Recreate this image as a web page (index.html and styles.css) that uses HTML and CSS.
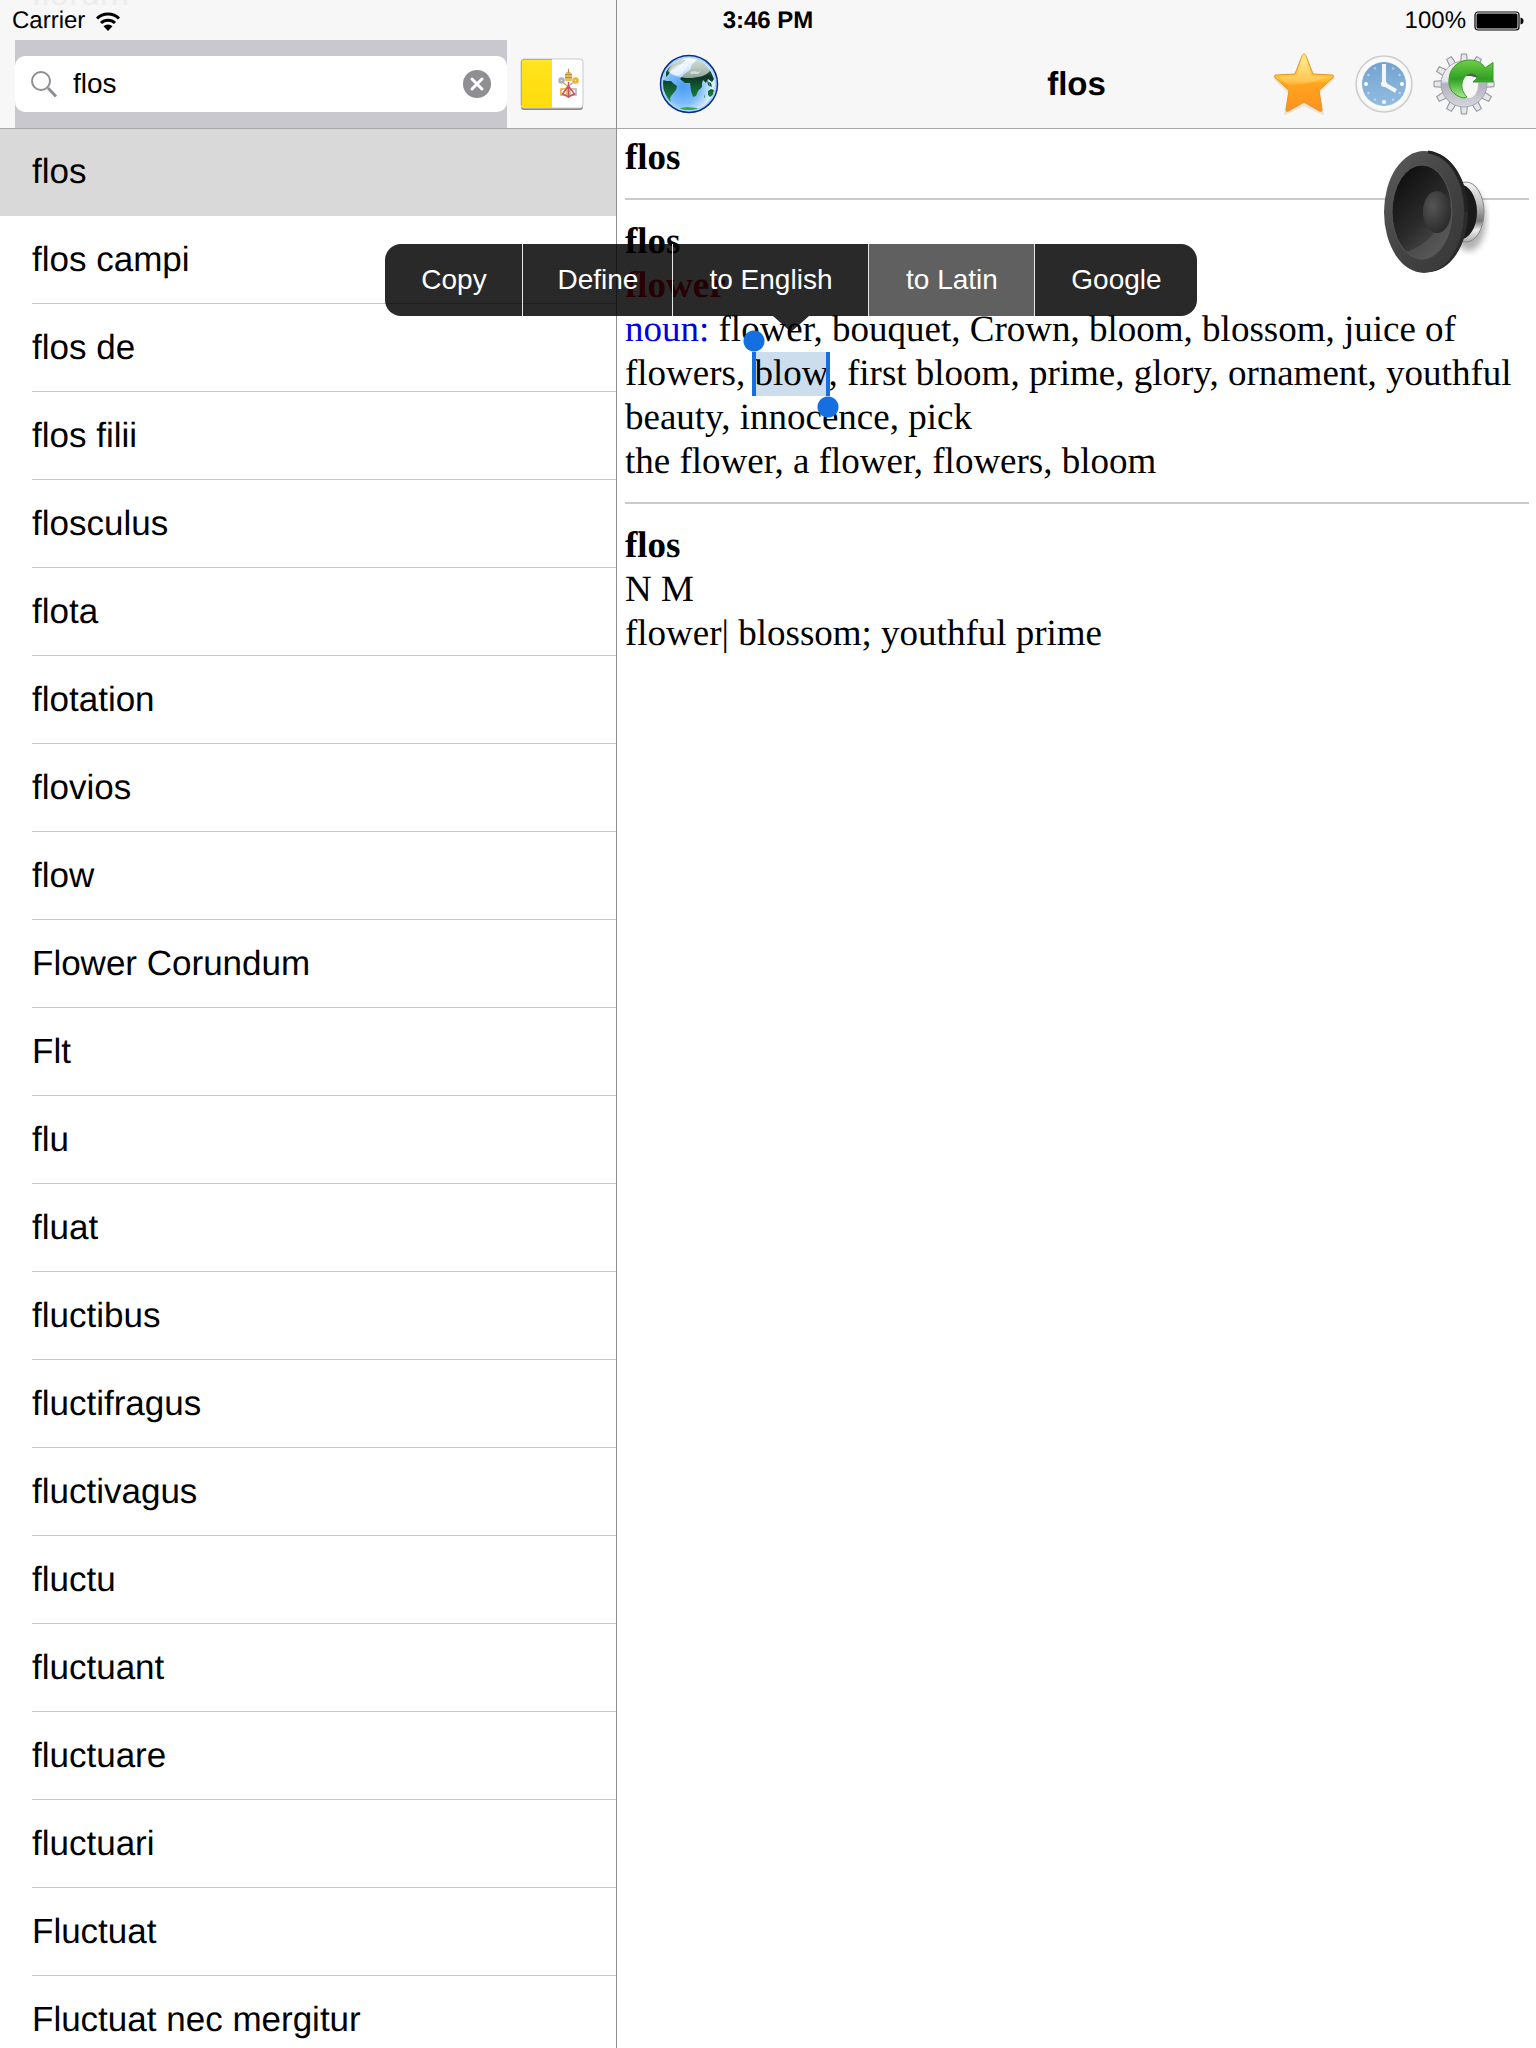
FILE: index.html
```html
<!DOCTYPE html>
<html lang="en">
<head>
    <meta charset="UTF-8">
    <meta name="viewport" content="width=device-width, initial-scale=1.0">
    <title>flos</title>
    <link rel="stylesheet" href="styles.css">
</head>
<body>

<div class="status-bar">
    <div class="carrier">
        Carrier
        <svg width="26" height="22" viewBox="0 0 26 22">
            <g fill="none" stroke="#000" stroke-width="3">
                <path d="M2 8.500a15.500 15.500 0 0 1 22 0"/>
                <path d="M6 13a10 10 0 0 1 14 0"/>
            </g>
            <path d="M13 21l-4.500-4.700a6.300 6.300 0 0 1 9 0z"/>
        </svg>
    </div>
    <div class="time">3:46 PM</div>
    <div class="battery">
        100%
        <svg width="50" height="20" viewBox="0 0 50 20">
            <rect x="1" y="1" width="44" height="18" rx="3" fill="none" stroke="#000" stroke-width="1.200"/>
            <rect x="2.500" y="2.500" width="41" height="15" rx="1.500"/>
            <path d="M46.500 6.500q3 .5 3 3.500t-3 3.500z"/>
        </svg>
    </div>
</div>

<div class="app">
    <aside class="sidebar">
        <div class="ghost" aria-hidden="true">florum</div>
        <header class="search-bar">
            <form class="search">
                <label class="field" for="query">
                    <svg width="28" height="28" viewBox="0 0 28 28" fill="none" stroke="#8e8e93">
                        <circle cx="10" cy="11" r="9" stroke-width="2"/>
                        <path d="M17 18l8 8.500" stroke-width="3"/>
                    </svg>
                    <input type="text" id="query" name="query" value="flos" aria-label="Search">
                    <button class="clear" type="reset" aria-label="Clear">
                        <svg width="28" height="28" viewBox="0 0 28 28">
                            <circle cx="14" cy="14" r="14" fill="#8e8e93"/>
                            <path d="M9 9l10 10M19 9L9 19" stroke="#fff" stroke-width="3" stroke-linecap="round"/>
                        </svg>
                    </button>
                </label>
            </form>
            <button class="icon-btn" type="button" aria-label="Latin">
                <svg width="64" height="56" viewBox="0 0 64 56">
                    <defs>
                        <linearGradient id="yellow" x1="0" y1="0" x2="0" y2="1">
                            <stop offset="0" stop-color="#ffe92e"/>
                            <stop offset=".1" stop-color="#ffe31c"/>
                            <stop offset="1" stop-color="#ffdc0c"/>
                        </linearGradient>
                    </defs>
                    <rect x="1" y="5" width="62" height="49" rx="3" fill="#8a8a8a"/>
                    <rect x="1" y="3" width="62" height="49" rx="3" fill="#fff" stroke="#c9c9c9"/>
                    <path d="M32 3H4a3 3 0 0 0-3 3v43a3 3 0 0 0 3 3h28z" fill="url(#yellow)"/>
                    <path d="M32 3.500H4a2.500 2.500 0 0 0-2.500 2.500v43" fill="none" stroke="#cdb425"/>
                    <!-- crossed keys and tiara -->
                    <g fill="none" stroke-width="1.500">
                        <path d="M41 25l9 7M41 33h6v6h-6z" stroke="#e8a93a"/>
                        <path d="M55 25l-9 7M50 33h6v6h-6z" stroke="#b3aeb0"/>
                        <path d="M48.500 26v16M48.500 30l-6 8 6 3 6-3z" stroke="#c4545a"/>
                    </g>
                    <g fill="none" stroke-width="2.500">
                        <circle cx="41.500" cy="24.500" r="2" stroke="#aeb0b8"/>
                        <circle cx="55.500" cy="24.500" r="2" stroke="#eeb22d"/>
                    </g>
                    <path d="M45.500 25c-1.500-5-1-8 3-10 4 2 4.500 5 3 10z" fill="#e2bb62"/>
                    <path d="M45 18.500h7M45 21.500h7M48.500 13v4" stroke="#b98c3c" fill="none"/>
                </svg>
            </button>
        </header>
        <ul class="words">
            <li><a class="active" href="#">flos</a></li>
            <li><a href="#">flos campi</a></li>
            <li><a href="#">flos de</a></li>
            <li><a href="#">flos filii</a></li>
            <li><a href="#">flosculus</a></li>
            <li><a href="#">flota</a></li>
            <li><a href="#">flotation</a></li>
            <li><a href="#">flovios</a></li>
            <li><a href="#">flow</a></li>
            <li><a href="#">Flower Corundum</a></li>
            <li><a href="#">Flt</a></li>
            <li><a href="#">flu</a></li>
            <li><a href="#">fluat</a></li>
            <li><a href="#">fluctibus</a></li>
            <li><a href="#">fluctifragus</a></li>
            <li><a href="#">fluctivagus</a></li>
            <li><a href="#">fluctu</a></li>
            <li><a href="#">fluctuant</a></li>
            <li><a href="#">fluctuare</a></li>
            <li><a href="#">fluctuari</a></li>
            <li><a href="#">Fluctuat</a></li>
            <li><a href="#">Fluctuat nec mergitur</a></li>
        </ul>
    </aside>

    <main class="detail">
        <header class="toolbar">
            <div class="tools">
                <button class="icon-btn" type="button" aria-label="Web">
                    <svg width="64" height="64" viewBox="0 0 64 64">
                        <defs>
                            <radialGradient id="sea" cx=".4" cy=".55" r=".6">
                                <stop offset="0" stop-color="#4a9cf5"/>
                                <stop offset=".5" stop-color="#7fbcfb"/>
                                <stop offset=".85" stop-color="#dceeff"/>
                                <stop offset="1" stop-color="#cfeaff"/>
                            </radialGradient>
                            <linearGradient id="land" x1="0" y1="10" x2="0" y2="48" gradientUnits="userSpaceOnUse">
                                <stop offset="0" stop-color="#4a7a5a"/>
                                <stop offset=".4" stop-color="#0b3528"/>
                                <stop offset="1" stop-color="#1d8a3c"/>
                            </linearGradient>
                            <linearGradient id="gloss" x1="0" y1="0" x2="0" y2="1">
                                <stop offset="0" stop-color="#fff" stop-opacity=".75"/>
                                <stop offset="1" stop-color="#fff" stop-opacity=".55"/>
                            </linearGradient>
                        </defs>
                        <circle cx="32" cy="32" r="28" fill="url(#sea)"/>
                        <g fill="url(#land)">
                            <path d="M9 20l4-6 5-4 6-3 5 1-6 5-4 3-5 3-3 4-2 2z"/>
                            <path d="M6 28l4 1 4 0 3 3 3 2-1 4-4 5-2 3 1 4-3-3-3-6-3-6z"/>
                            <path d="M23 27l4-5 6-4 2-6 6-5 8 6 5 7 3 7-2 3-4-3-2 4-3-3-1 3 0 4-4 4-2 5-3 1-2-6-1-8-5 0z"/>
                            <path d="M51 39l3-2 3 1-1 5-3 2-2-2zM52 30l2 1 1 4-2-1zM48 42l0 3-1 1z"/>
                            <path d="M50 28l2 3 1 4-2-2z"/>
                        </g>
                        <path d="M23 56l7-1 10 1 1 1-9 2-8-1z" fill="#32a852"/>
                        <path d="M11 19C15 9 23 5 32 5s17 4 21 14c-4 5-13 7-21 7s-16-2-21-7z" fill="url(#gloss)"/>
                        <path d="M12 20c4-7 12-9 19-8-1 5-4 7-8 11-5 1-8 0-11-3zM33 20l4-1 4 1 3-1-3 3-7 0z" fill="#fff" opacity=".5"/>
                        <circle cx="32" cy="32" r="27" fill="none" stroke="#a5d9fb" stroke-width="2"/>
                        <circle cx="32" cy="32" r="28.500" fill="none" stroke="#0d2c8c" stroke-width="1.500"/>
                    </svg>
                </button>
            </div>
            <h1>flos</h1>
            <div class="tools tools-right">
                <button class="icon-btn" type="button" aria-label="Favourites">
                    <svg width="64" height="64" viewBox="0 0 64 64">
                        <defs>
                            <linearGradient id="star" x1="0" y1="0" x2="0" y2="1">
                                <stop offset="0" stop-color="#fff08c"/>
                                <stop offset=".48" stop-color="#ffb828"/>
                                <stop offset=".5" stop-color="#ffa61c"/>
                                <stop offset="1" stop-color="#ff9022"/>
                            </linearGradient>
                        </defs>
                        <path d="M32 4L22.500 24 2 26l15 15-4 21 19-9 19 9-4-21 15-15-20.500-2z" fill="#d8c69c" opacity=".6" stroke="#e5d9ba" stroke-width="2" stroke-linejoin="round"/>
                        <path d="M32 2c-1 0-1.500 1-2 2l-7 18-19 1c-2 0-2 1.500-1 2.500l14 13-3 19c0 2 1 2.500 2.500 1.500L32 50l15.500 9c1.500 1 2.500.5 2.500-1.500l-3-19 14-13c1-1 1-2.500-1-2.500l-19-1-7-18c-.5-1-1-2-2-2z" fill="url(#star)" stroke="#e0962b"/>
                        <path d="M32 5l-7 19-18 1 7 7q18 2 33-4l10-3-18-1z" fill="#fff" opacity=".18"/>
                    </svg>
                </button>
                <button class="icon-btn" type="button" aria-label="History">
                    <svg width="64" height="64" viewBox="0 0 64 64">
                        <defs>
                            <linearGradient id="face" x1="0" y1="0" x2="0" y2="1">
                                <stop offset="0" stop-color="#72a3cf"/>
                                <stop offset="1" stop-color="#93bde0"/>
                            </linearGradient>
                        </defs>
                        <circle cx="32" cy="32" r="28" fill="#f4f4f5" stroke="#cdcdd0" stroke-width="1.500"/>
                        <circle cx="32" cy="31.500" r="26" fill="#fafafb"/>
                        <circle cx="32" cy="32" r="22" fill="url(#face)"/>
                        <g fill="#fff">
                            <circle cx="14" cy="32" r="2"/>
                            <circle cx="50" cy="32" r="2"/>
                            <circle cx="32" cy="50" r="2"/>
                            <g opacity=".45">
                                <circle cx="16.400" cy="23" r="1.200"/>
                                <circle cx="23" cy="16.400" r="1.200"/>
                                <circle cx="41" cy="16.400" r="1.200"/>
                                <circle cx="47.600" cy="23" r="1.200"/>
                                <circle cx="47.600" cy="41" r="1.200"/>
                                <circle cx="41" cy="47.600" r="1.200"/>
                                <circle cx="23" cy="47.600" r="1.200"/>
                                <circle cx="16.400" cy="41" r="1.200"/>
                            </g>
                        </g>
                        <path d="M32 12v20l12 7" fill="none" stroke="#f3f5f8" stroke-width="4"/>
                        <circle cx="32" cy="32" r="3" fill="#f3f5f8"/>
                    </svg>
                </button>
                <button class="icon-btn" type="button" aria-label="Settings">
                    <svg width="64" height="64" viewBox="0 0 64 64">
                        <defs>
                            <linearGradient id="steel" x1="0" y1="2" x2="0" y2="62" gradientUnits="userSpaceOnUse">
                                <stop offset="0" stop-color="#fbfbfc"/>
                                <stop offset=".45" stop-color="#e4e4ea"/>
                                <stop offset=".5" stop-color="#b0b0be"/>
                                <stop offset="1" stop-color="#e2e2e9"/>
                            </linearGradient>
                            <linearGradient id="leaf" x1="0" y1="0" x2="0" y2="1">
                                <stop offset="0" stop-color="#6fd044"/>
                                <stop offset=".5" stop-color="#2fa025"/>
                                <stop offset="1" stop-color="#a8ef8c"/>
                            </linearGradient>
                            <path id="tooth" d="M28.500 13l.8-11h5.400l.8 11z"/>
                        </defs>
                        <g fill="#e6e6ec" stroke="#8e8e96">
                            <use href="#tooth"/>
                            <use href="#tooth" transform="rotate(30 32 32)"/>
                            <use href="#tooth" transform="rotate(60 32 32)"/>
                            <use href="#tooth" transform="rotate(90 32 32)"/>
                            <use href="#tooth" transform="rotate(120 32 32)"/>
                            <use href="#tooth" transform="rotate(150 32 32)"/>
                            <use href="#tooth" transform="rotate(180 32 32)"/>
                            <use href="#tooth" transform="rotate(210 32 32)"/>
                            <use href="#tooth" transform="rotate(240 32 32)"/>
                            <use href="#tooth" transform="rotate(270 32 32)"/>
                            <use href="#tooth" transform="rotate(300 32 32)"/>
                            <use href="#tooth" transform="rotate(330 32 32)"/>
                        </g>
                        <circle cx="32" cy="32" r="23" fill="url(#steel)" stroke="#a4a4ae"/>
                        <circle cx="33" cy="32" r="14" fill="#c3c3cc"/>
                        <ellipse cx="37" cy="33" rx="9" ry="13" fill="#f7f7f7"/>
                        <path d="M32 24q4-6 10-4l4 6-7-2z" fill="#555"/>
                        <path d="M32 46C21 44 16 36 17 27 18 14 28 8 38 8c8 0 13 4 15 8l8-5.500V30H41l5-5c-4-5-11-4-14 1-4 7-2 14 3 19z" fill="url(#leaf)" stroke="#3a9a2a"/>
                    </svg>
                </button>
            </div>
        </header>

        <article class="entry">
            <button class="speaker" type="button" aria-label="Pronounce">
                <svg width="128" height="128" viewBox="0 0 128 128">
                    <defs>
                        <linearGradient id="rim" x1="0" y1="0" x2="1" y2="1">
                            <stop offset="0" stop-color="#5c5c5c"/>
                            <stop offset=".5" stop-color="#444"/>
                            <stop offset="1" stop-color="#363636"/>
                        </linearGradient>
                        <linearGradient id="cone" x1=".2" y1=".1" x2=".8" y2="1">
                            <stop offset="0" stop-color="#111"/>
                            <stop offset=".5" stop-color="#2a2a2a"/>
                            <stop offset="1" stop-color="#565656"/>
                        </linearGradient>
                        <radialGradient id="dome" cx=".35" cy=".35" r=".7">
                            <stop offset="0" stop-color="#555"/>
                            <stop offset="1" stop-color="#2b2b2b"/>
                        </radialGradient>
                        <linearGradient id="chrome" x1="0" y1="0" x2="0" y2="1">
                            <stop offset="0" stop-color="#f4f4f4"/>
                            <stop offset=".35" stop-color="#c4c4c4"/>
                            <stop offset=".65" stop-color="#777"/>
                            <stop offset=".8" stop-color="#eee"/>
                            <stop offset="1" stop-color="#aaa"/>
                        </linearGradient>
                        <filter id="soft"><feGaussianBlur stdDeviation="3"/></filter>
                    </defs>
                    <ellipse cx="93" cy="72" rx="17" ry="31" fill="#000" opacity=".3" filter="url(#soft)"/>
                    <ellipse cx="90" cy="64" rx="18" ry="30" fill="url(#chrome)" stroke="#888"/>
                    <ellipse cx="83" cy="64" rx="18" ry="28" fill="#1a1a1a"/>
                    <ellipse cx="52" cy="64" rx="40" ry="60" fill="#2b2b2b"/>
                    <ellipse cx="48" cy="64" rx="40" ry="61" fill="url(#rim)"/>
                    <path d="M52 4c23 3 39 30 38 60" fill="none" stroke="#222" stroke-width="3"/>
                    <ellipse cx="46" cy="64" rx="30" ry="47" fill="url(#cone)"/>
                    <path d="M30 104C54 96 66 78 75 54c6 30-12 62-33 57-5-1-9-4-12-7z" fill="#666" opacity=".4"/>
                    <ellipse cx="61" cy="64" rx="14" ry="21" fill="url(#dome)"/>
                    <ellipse cx="46" cy="64" rx="30" ry="47" fill="none" stroke="#555"/>
                </svg>
            </button>
            <h2>flos</h2>
            <hr>
            <h2>flos</h2>
            <h2 class="translation">flower</h2>
            <p><span class="pos">noun:</span> flower, bouquet, Crown, bloom, blossom, juice of flowers, <span class="selection">blow<span class="menu" role="menu">
                <button type="button" role="menuitem">Copy</button>
                <button type="button" role="menuitem">Define</button>
                <button type="button" role="menuitem">to English</button>
                <button class="pressed" type="button" role="menuitem">to Latin</button>
                <button type="button" role="menuitem">Google</button>
            </span></span>, first bloom, prime, glory, ornament, youthful beauty, innocence, pick</p>
            <p>the flower, a flower, flowers, bloom</p>
            <hr>
            <h2>flos</h2>
            <p>N M</p>
            <p>flower| blossom; youthful prime</p>
        </article>
    </main>
</div>

</body>
</html>
```
FILE: styles.css
```css
* {
    box-sizing: border-box;
}

body {
    margin: 0;
    font-family: "Liberation Sans", Arial, sans-serif;
    color: #000;
    background: #fff;
    text-rendering: geometricPrecision;
}

button {
    padding: 0;
    border: none;
    background: none;
    color: inherit;
    font: inherit;
    cursor: pointer;
}

svg {
    display: block;
}

/* status bar */
.status-bar {
    position: absolute;
    top: 0;
    left: 0;
    right: 0;
    z-index: 2;
    display: grid;
    grid-template-columns: 1fr auto 1fr;
    align-items: center;
    height: 42px;
    padding: 0 12px;
    font-size: 24px;
}

.carrier,
.battery {
    display: flex;
    align-items: center;
    gap: 10px;
}

.battery {
    justify-content: flex-end;
    gap: 8px;
}

.time {
    font-weight: bold;
}

/* layout */
.app {
    display: flex;
    height: 100vh;
    overflow: hidden;
}

.sidebar {
    position: relative;
    flex: 0 0 617px;
    border-right: 1px solid #8e8e92;
}

.detail {
    position: relative;
    flex: 1;
    min-width: 0;
}

.search-bar,
.toolbar {
    height: 129px;
    margin-bottom: -1px;
    padding-top: 40px;
    border-bottom: 1px solid #a9a9ab;
    background: #f7f7f7;
    position: relative;
}

/* search */
.search-bar {
    display: flex;
    align-items: center;
    gap: 13px;
    padding-left: 15px;
    z-index: 1;
}

.ghost {
    position: absolute;
    top: -24px;
    left: 32px;
    z-index: 2;
    font-size: 35px;
    line-height: 36px;
    color: #ededed;
}

.search {
    display: flex;
    align-items: center;
    width: 492px;
    height: 88px;
    background: #c9c8ce;
}

.field {
    display: flex;
    align-items: center;
    gap: 14px;
    width: 100%;
    height: 56px;
    padding: 0 16px;
    border-radius: 10px;
    background: #fff;
}

.field input {
    flex: 1;
    min-width: 0;
    padding: 0;
    border: none;
    outline: none;
    background: none;
    font: inherit;
    font-size: 28px;
}

/* word list */
.words {
    margin: 0;
    padding: 0;
    list-style: none;
}

.words a {
    display: block;
    height: 88px;
    padding-left: 32px;
    font-size: 35px;
    line-height: 88px;
    color: #000;
    text-decoration: none;
    background: linear-gradient(#c8c7cc, #c8c7cc) 32px 100% / 100% 1px no-repeat;
}

.words .active {
    background: #d9d9d9;
}

/* toolbar */
.toolbar {
    display: grid;
    grid-template-columns: 1fr auto 1fr;
    align-items: center;
    padding-left: 40px;
    padding-right: 40px;
}

.toolbar h1 {
    margin: 0;
    font-size: 33px;
}

.tools {
    display: flex;
    gap: 16px;
}

.tools-right {
    justify-content: flex-end;
}

/* dictionary entry */
.entry {
    position: relative;
    padding: 8px 7px 8px 8px;
    font-family: "Liberation Serif", "Times New Roman", serif;
    font-size: 37px;
    line-height: 44px;
}

.entry h2,
.entry p {
    margin: 0;
    font-size: 37px;
}

.entry hr {
    height: 2px;
    margin: 18px 0 20px;
    border: none;
    background: #cacaca;
}

.translation {
    color: #e6001a;
}

.pos {
    color: #0000e0;
}

.speaker {
    position: absolute;
    top: 20px;
    right: 32px;
}

/* selected word and its menu */
.selection {
    position: relative;
    display: inline-block;
    background: #ccdded;
}

.selection::before,
.selection::after {
    content: "";
    position: absolute;
    width: 22px;
    height: 66px;
    background:
        radial-gradient(circle at 11px 11px, #156fe0 10px, transparent 11px),
        linear-gradient(#156fe0, #156fe0) 9px 100% / 4px 44px no-repeat;
}

.selection::before {
    left: -11px;
    bottom: 0;
}

.selection::after {
    right: -11px;
    top: 0;
    transform: rotate(180deg);
}

.menu {
    position: absolute;
    left: 50%;
    bottom: 80px;
    z-index: 3;
    display: grid;
    grid-template-columns: 138px 150px 196px 166px 162px;
    width: 812px;
    height: 72px;
    margin-left: -406px;
    font-family: "Liberation Sans", Arial, sans-serif;
    font-size: 28px;
    color: #fff;
}

.menu::after {
    content: "";
    position: absolute;
    top: 100%;
    left: 50%;
    margin-left: -18px;
    border: 18px solid transparent;
    border-top: 16px solid rgba(0, 0, 0, 0.84);
    border-bottom: none;
}

.menu button {
    border-right: 1px solid #e6e6e6;
    background: rgba(0, 0, 0, 0.84);
    background-clip: padding-box;
}

.menu button:first-child {
    border-radius: 16px 0 0 16px;
}

.menu button:last-child {
    border-right: none;
    border-radius: 0 16px 16px 0;
}

.menu .pressed {
    background-color: #606060;
}
```
